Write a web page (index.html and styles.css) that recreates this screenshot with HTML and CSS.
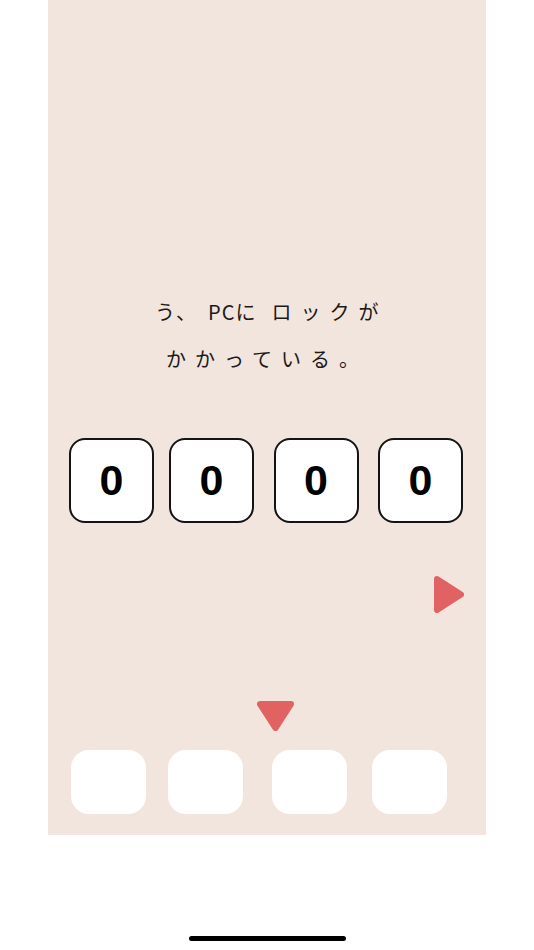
FILE: index.html
```html
<!DOCTYPE html>
<html lang="ja">
<head>
<meta charset="utf-8">
<title>Lock</title>
<link rel="stylesheet" href="styles.css">
</head>
<body>
<main class="screen">
  <div class="message">
    <p class="line line-1"><span class="tight">う</span><span class="comma">、</span><span class="latin">PC</span><span class="wide">に</span>ロックが</p>
    <p class="line line-2">かかっている。</p>
  </div>
  <div class="digits">
    <div class="digit">0</div>
    <div class="digit">0</div>
    <div class="digit">0</div>
    <div class="digit">0</div>
  </div>
  <div class="next-row">
    <svg class="arrow-right" width="30" height="37" viewBox="0 0 30 37">
      <polygon points="3,3 27,18.5 3,34" fill="#e06262" stroke="#e06262" stroke-width="6" stroke-linejoin="round"/>
    </svg>
  </div>
  <div class="down-row">
    <svg class="arrow-down" width="37" height="30" viewBox="0 0 37 30">
      <polygon points="3,3 34,3 18.5,27" fill="#e06262" stroke="#e06262" stroke-width="6" stroke-linejoin="round"/>
    </svg>
  </div>
  <div class="slots">
    <div class="slot"></div>
    <div class="slot"></div>
    <div class="slot"></div>
    <div class="slot"></div>
  </div>
</main>
<div class="home-indicator"></div>
</body>
</html>
```
FILE: styles.css
```css
html, body {
  margin: 0;
  padding: 0;
  background: #ffffff;
}

body {
  width: 534px;
  height: 950px;
  overflow: hidden;
  font-family: "Noto Sans CJK JP", "Noto Sans", sans-serif;
}

.screen {
  width: 438px;
  height: 835px;
  margin-left: 48px;
  background: #f2e5dd;
  box-sizing: border-box;
  padding-top: 288px;
  display: flex;
  flex-direction: column;
}

.message {
  color: #1a1a1a;
  font-size: 20px;
}

.line {
  margin: 0;
  line-height: 47px;
  font-weight: 400;
  white-space: nowrap;
}

.line-1 {
  padding-left: 107px;
  letter-spacing: 9px;
}

.line-2 {
  padding-left: 118px;
  letter-spacing: 9px;
}

.tight { letter-spacing: 1px; }
.comma { letter-spacing: 12px; }
.latin { letter-spacing: 1px; }
.wide { letter-spacing: 16px; }

.digits {
  display: flex;
  gap: 15px;
  margin-top: 56px;
  padding-left: 21px;
}

.digit {
  width: 85px;
  height: 85px;
  box-sizing: border-box;
  border: 2px solid #141414;
  border-radius: 16px;
  background: #ffffff;
  display: flex;
  align-items: center;
  justify-content: center;
  font-family: "Liberation Sans", Arial, sans-serif;
  font-weight: 700;
  font-size: 43px;
  color: #000000;
}

.digit:nth-child(n+3) {
  margin-left: 4.5px;
}

.next-row {
  display: flex;
  justify-content: flex-end;
  padding-right: 22px;
  margin-top: 53px;
  height: 37px;
}

.arrow-right, .arrow-down {
  display: block;
}

.down-row {
  display: flex;
  justify-content: center;
  padding-left: 17px;
  margin-top: 88px;
  height: 30px;
}

.slots {
  display: flex;
  margin-top: 18.5px;
  padding-left: 23px;
}

.slot {
  width: 75px;
  height: 64px;
  background: #ffffff;
  border-radius: 18px;
}

.slot:nth-child(2) { margin-left: 22px; }
.slot:nth-child(3) { margin-left: 29px; }
.slot:nth-child(4) { margin-left: 25px; }

.home-indicator {
  width: 157px;
  height: 5px;
  border-radius: 3px;
  background: #000000;
  margin: 101px auto 0;
}
```
